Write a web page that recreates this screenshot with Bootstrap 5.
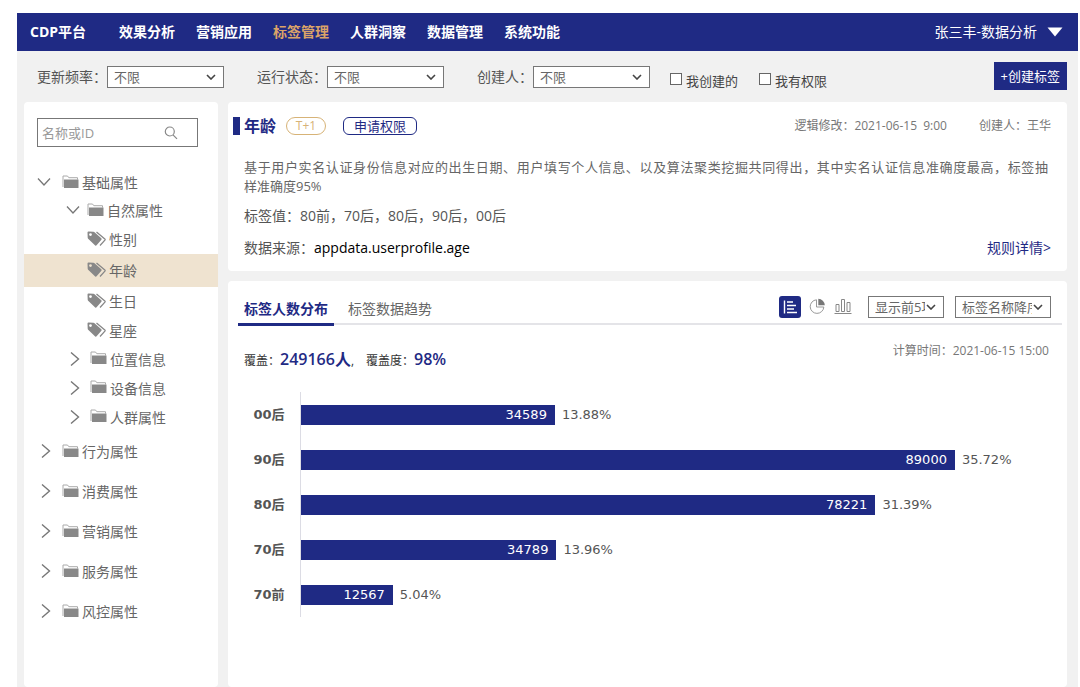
<!DOCTYPE html>
<html lang="zh-CN">
<head>
<meta charset="utf-8">
<meta name="viewport" content="width=device-width, initial-scale=1">
<title>CDP平台 - 标签管理</title>
<link rel="stylesheet" href="https://cdn.jsdelivr.net/npm/bootstrap@5.3.0/dist/css/bootstrap.min.css">
<style>
  :root { --brand: #1f2a84; --gold: #d7b377; --ink: #555; --mute: #777; }
  body { font-family: "Open Sans", "Noto Sans CJK SC", sans-serif; font-size: 14px; line-height: 20px; color: var(--ink); background: #fff; }
  a { text-decoration: none; color: inherit; }
  .shell { background: #f1f1f1; margin: 13px 2px 0 17px; min-height: calc(100vh - 13px); }
  .topbar { background: var(--brand); color: #fff; height: 38px; padding: 0 15px 0 13px; font-weight: 700; }
  .topbar .main-menu { gap: 21px; margin-left: 33px; }
  .topbar .current { color: #dba368; }
  .topbar .account { font-weight: 400; color: #fff; background: none; border: 0; padding: 0; gap: 10px; }
  .filters { height: 51px; padding: 0 11px 0 20px; }
  .filters .group { margin-right: 33px; }
  .pick { appearance: none; border: 1px solid #777; border-radius: 0; color: #666; font-size: 13px; height: 22px; line-height: 18px; padding: 0 18px 0 6px; text-overflow: clip;
    background: #fff url("data:image/svg+xml,%3Csvg xmlns='http://www.w3.org/2000/svg' viewBox='0 0 10 6'%3E%3Cpath d='M1 1l4 4 4-4' fill='none' stroke='%23444' stroke-width='1.6'/%3E%3C/svg%3E") no-repeat right 7px center / 10px 6px; }
  .filters .pick { width: 117px; }
  .pick.top-count { width: 76px; }
  .pick.sorting { width: 96px; margin-left: 11px; }
  .tick { gap: 4px; margin-right: 21px; font-size: 13px; padding-top: 8px; color: #444; }
  .tick .form-check-input { width: 12px; height: 12px; margin: 0 0 4px; border: 1px solid #666; border-radius: 0; }
  .create { background: var(--brand); color: #fff; border: 0; border-radius: 0; font-size: 13px; line-height: 18px; padding: 5px 7px; margin-bottom: 2px; }
  .columns { padding: 0 11px 0 7px; gap: 10px; }
  .content-stack { gap: 10px; }
  .panel { background: #fff; border-radius: 4px; }
  .side { width: 194px; min-height: calc(100vh - 102px); }
  .finder { margin: 16px 20px 22px 13px; border: 1px solid #777; height: 29px; padding: 0 19px 0 4px; }
  .finder input { border: 0; outline: 0; font-size: 13px; min-width: 0; padding: 0; background: none; }
  .finder input::placeholder { color: #999; opacity: 1; }
  .finder svg { flex: none; }
  .tree a { display: flex; align-items: center; height: 29px; color: #666; }
  .tree .lv1 > a { height: 40px; padding-left: 13px; }
  .tree .lv1 > a.open, .tree .lv2 > a.open { height: 28px; }
  .tree .lv2 > a { padding-left: 42px; }
  .tree .lv3 > a { padding-left: 63px; }
  .tree .lv3 > a.chosen { height: 33px; background: #efe3d0; }
  .tree svg { flex: none; margin-right: 3px; margin-bottom: 3px; }
  .tree svg.arrow { margin-right: 11px; margin-bottom: 2px; }
  .tree .lv2 svg.arrow { margin-right: 10px; }
  .tree .lv2 > a.open svg.arrow { margin-right: 7px; }
  .info { padding: 14px 16px 13px 5px; min-height: 168px; }
  .info h1 { font-size: 16px; line-height: 18px; font-weight: 700; color: var(--brand); border-left: 7px solid var(--brand); padding-left: 4px; margin: 0 10px 0 0; }
  .cycle { border: 1px solid var(--gold); color: var(--gold); border-radius: 9px; font-size: 12px; line-height: 16px; width: 40px; text-align: center; margin-right: 17px; }
  .apply { border: 1px solid var(--brand); color: var(--brand); background: #fff; border-radius: 6px; font-size: 13px; line-height: 16px; padding: 0 10px; }
  .meta { font-size: 12px; color: var(--mute); }
  .info .body-text { padding: 22px 0 0 11px; }
  .summary { font-size: 13px; line-height: 19px; margin: 0 3px 10px 0; text-align: justify; color: #666; }
  .detail-link { color: var(--brand); }
  .report { padding: 13px 5px 0 10px; }
  .tabs { border-bottom: 2px solid #e4e4e8; height: 31px; }
  .tabs .tab-link { height: 32px; line-height: 30px; border: 0; border-bottom: 3px solid transparent; background: none; padding: 0 6px; color: #666; }
  .tabs .tab-link.active { border-color: var(--brand); color: var(--brand); font-weight: 700; }
  .tools { padding-right: 11px; padding-bottom: 4px; }
  .tool { border: 0; background: none; padding: 0; line-height: 0; }
  .figures { color: #333; font-size: 12px; padding: 21px 0 0 6px; line-height: 26px; }
  .figures b { font-size: 16px; font-weight: 600; color: var(--brand); }
  .figures span { margin-left: 12px; }
  .stamp { padding: 16px 13px 0 0; }
  .chart { margin: 18px 11px 0 5px; font-family: "DejaVu Sans", "Noto Sans CJK SC", sans-serif; font-size: 13px; }
  .chart th { width: 57px; height: 45px; padding: 0 15px 0 0; text-align: right; color: #555; white-space: nowrap; }
  .chart td { border-left: 1px solid #dcdce4; padding: 0; }
  .chart .fill { background: var(--brand); color: #fff; height: 20px; line-height: 20px; padding-right: 8px; text-align: right; margin-right: 7px; }
</style>
</head>
<body>
<svg class="d-none" xmlns="http://www.w3.org/2000/svg">
  <symbol id="down" viewBox="0 0 14 14"><path d="M1 3.5l6 6.5 6-6.5" fill="none" stroke="#777" stroke-width="1.3"/></symbol>
  <symbol id="right" viewBox="0 0 14 14"><path d="M5 0.5l7.500 6.500L5 13.500" fill="none" stroke="#777" stroke-width="1.4"/></symbol>
  <symbol id="folder" viewBox="0 0 17 14"><path d="M1 12V1h4.500l1.300 1.700h8.700V4.500" fill="none" stroke="#aaa"/><path d="M2 4.500h14.500V13H2z" fill="#888"/></symbol>
  <symbol id="tags" viewBox="0 0 19 15"><path fill-rule="evenodd" d="M.5 1.500Q.5.5 1.500.5l5 .3q.7 0 1.300.6l6.500 5.900q.7.700.1 1.400l-4.800 5.600q-.7.700-1.400.1L1.400 8Q.8 7.500.7 6.700zM3.500 2.200a1.400 1.400 0 100 2.800 1.400 1.400 0 000-2.800z" fill="#888"/><path d="M9.500.9l8.300 7q.6.600.1 1.200l-4.900 5.400" fill="none" stroke="#888" stroke-width="1.300"/></symbol>
</svg>
<div class="shell">
  <header class="topbar d-flex align-items-center">
    <a href="#">CDP平台</a>
    <nav class="main-menu d-flex">
      <a href="#">效果分析</a><a href="#">营销应用</a><a href="#" class="current">标签管理</a><a href="#">人群洞察</a><a href="#">数据管理</a><a href="#">系统功能</a>
    </nav>
    <button type="button" class="account ms-auto d-flex align-items-center">张三丰-数据分析
      <svg width="16" height="10" viewBox="0 0 16 10"><path d="M.5.500h15L8 9.500z" fill="#fff"/></svg>
    </button>
  </header>

  <form class="filters d-flex align-items-center">
    <div class="group d-flex align-items-center"><label for="freq">更新频率：</label><select id="freq" class="pick"><option>不限</option></select></div>
    <div class="group d-flex align-items-center"><label for="state">运行状态：</label><select id="state" class="pick"><option>不限</option></select></div>
    <div class="d-flex align-items-center me-3"><label for="owner">创建人：</label><select id="owner" class="pick"><option>不限</option></select></div>
    <label class="tick d-flex align-items-center ms-1"><input type="checkbox" class="form-check-input">我创建的</label>
    <label class="tick d-flex align-items-center"><input type="checkbox" class="form-check-input">我有权限</label>
    <button type="button" class="create ms-auto">+创建标签</button>
  </form>

  <div class="columns d-flex">
    <aside class="side panel flex-shrink-0">
      <div class="finder d-flex align-items-center">
        <input type="search" class="flex-grow-1" placeholder="名称或ID" aria-label="名称或ID">
        <svg width="14" height="14" viewBox="0 0 14 14" fill="none" stroke="#888" stroke-width="1.200"><circle cx="5.800" cy="5.500" r="4.500"/><path d="M9 8.800l4 4"/></svg>
      </div>
      <ul class="tree list-unstyled m-0">
        <li class="lv1"><a href="#" class="open"><svg class="arrow" width="14" height="14"><use href="#down"/></svg><svg width="17" height="14"><use href="#folder"/></svg>基础属性</a>
          <ul class="list-unstyled">
            <li class="lv2"><a href="#" class="open"><svg class="arrow" width="14" height="14"><use href="#down"/></svg><svg width="17" height="14"><use href="#folder"/></svg>自然属性</a>
              <ul class="list-unstyled">
                <li class="lv3"><a href="#"><svg width="19" height="15"><use href="#tags"/></svg>性别</a></li>
                <li class="lv3"><a href="#" class="chosen"><svg width="19" height="15"><use href="#tags"/></svg>年龄</a></li>
                <li class="lv3"><a href="#"><svg width="19" height="15"><use href="#tags"/></svg>生日</a></li>
                <li class="lv3"><a href="#"><svg width="19" height="15"><use href="#tags"/></svg>星座</a></li>
              </ul>
            </li>
            <li class="lv2"><a href="#"><svg class="arrow" width="14" height="14"><use href="#right"/></svg><svg width="17" height="14"><use href="#folder"/></svg>位置信息</a></li>
            <li class="lv2"><a href="#"><svg class="arrow" width="14" height="14"><use href="#right"/></svg><svg width="17" height="14"><use href="#folder"/></svg>设备信息</a></li>
            <li class="lv2"><a href="#"><svg class="arrow" width="14" height="14"><use href="#right"/></svg><svg width="17" height="14"><use href="#folder"/></svg>人群属性</a></li>
          </ul>
        </li>
        <li class="lv1"><a href="#"><svg class="arrow" width="14" height="14"><use href="#right"/></svg><svg width="17" height="14"><use href="#folder"/></svg>行为属性</a></li>
        <li class="lv1"><a href="#"><svg class="arrow" width="14" height="14"><use href="#right"/></svg><svg width="17" height="14"><use href="#folder"/></svg>消费属性</a></li>
        <li class="lv1"><a href="#"><svg class="arrow" width="14" height="14"><use href="#right"/></svg><svg width="17" height="14"><use href="#folder"/></svg>营销属性</a></li>
        <li class="lv1"><a href="#"><svg class="arrow" width="14" height="14"><use href="#right"/></svg><svg width="17" height="14"><use href="#folder"/></svg>服务属性</a></li>
        <li class="lv1"><a href="#"><svg class="arrow" width="14" height="14"><use href="#right"/></svg><svg width="17" height="14"><use href="#folder"/></svg>风控属性</a></li>
      </ul>
    </aside>

    <main class="content-stack flex-grow-1 d-flex flex-column">
      <section class="info panel">
        <div class="d-flex align-items-center">
          <h1>年龄</h1><span class="cycle">T+1</span><button type="button" class="apply">申请权限</button>
          <div class="meta ms-auto d-flex"><span class="me-3 pe-3">逻辑修改：2021-06-15&nbsp; 9:00</span><span>创建人：王华</span></div>
        </div>
        <div class="body-text">
          <p class="summary">基于用户实名认证身份信息对应的出生日期、用户填写个人信息、以及算法聚类挖掘共同得出，其中实名认证信息准确度最高，标签抽<span class="text-nowrap">样准确度95%</span></p>
          <p class="mb-2">标签值：80前，70后，80后，90后，00后</p>
          <div class="d-flex pt-1"><span>数据来源：<span class="text-black">appdata.userprofile.age</span></span><a href="#" class="detail-link ms-auto">规则详情&gt;</a></div>
        </div>
      </section>

      <section class="report panel flex-grow-1">
        <div class="tabs d-flex">
          <button type="button" class="tab-link active">标签人数分布</button>
          <button type="button" class="tab-link ms-2">标签数据趋势</button>
          <div class="tools ms-auto d-flex align-items-center">
            <button type="button" class="tool me-2" aria-label="条形图"><svg width="22" height="22" viewBox="0 0 22 22"><rect width="22" height="22" rx="3" fill="#1f2a84"/><path d="M5.500 4.500v13M8 6h6M8 9.500h9M8 13h7M8 16.500h10" stroke="#fff" stroke-width="1.400" fill="none"/></svg></button>
            <button type="button" class="tool me-2" aria-label="饼图"><svg width="17" height="17" viewBox="0 0 17 17"><path d="M7.500 1.800A6.800 6.800 0 1014.800 9H7.500z" fill="none" stroke="#999"/><path d="M9.300.8a6.800 6.800 0 016.500 6.500H9.300z" fill="#777"/></svg></button>
            <button type="button" class="tool me-3" aria-label="柱状图"><svg width="18" height="17" viewBox="0 0 17 17" fill="none" stroke="#888"><path d="M0 15.500h17M1.500 6.500h3v7h-3zM7 1.500h3v12H7zM12.500 4.500h3v9h-3z"/></svg></button>
            <select class="pick top-count" aria-label="显示数量"><option>显示前5项</option></select>
            <select class="pick sorting" aria-label="排序"><option>标签名称降序</option></select>
          </div>
        </div>
        <div class="d-flex">
          <div class="figures">覆盖：<b>249166人</b>,<span>覆盖度：</span><b>98%</b></div>
          <div class="meta stamp ms-auto">计算时间：2021-06-15 15:00</div>
        </div>
        <div class="chart">
          <table class="w-100">
            <tbody>
              <tr><th scope="row">00后</th><td><div class="d-flex align-items-center"><div class="fill" style="width:33.9%">34589</div>13.88%</div></td></tr>
              <tr><th scope="row">90后</th><td><div class="d-flex align-items-center"><div class="fill" style="width:87.2%">89000</div>35.72%</div></td></tr>
              <tr><th scope="row">80后</th><td><div class="d-flex align-items-center"><div class="fill" style="width:76.6%">78221</div>31.39%</div></td></tr>
              <tr><th scope="row">70后</th><td><div class="d-flex align-items-center"><div class="fill" style="width:34.1%">34789</div>13.96%</div></td></tr>
              <tr><th scope="row">70前</th><td><div class="d-flex align-items-center"><div class="fill" style="width:12.3%">12567</div>5.04%</div></td></tr>
            </tbody>
          </table>
        </div>
      </section>
    </main>
  </div>
</div>
<script src="https://cdn.jsdelivr.net/npm/bootstrap@5.3.0/dist/js/bootstrap.bundle.min.js"></script>
</body>
</html>
